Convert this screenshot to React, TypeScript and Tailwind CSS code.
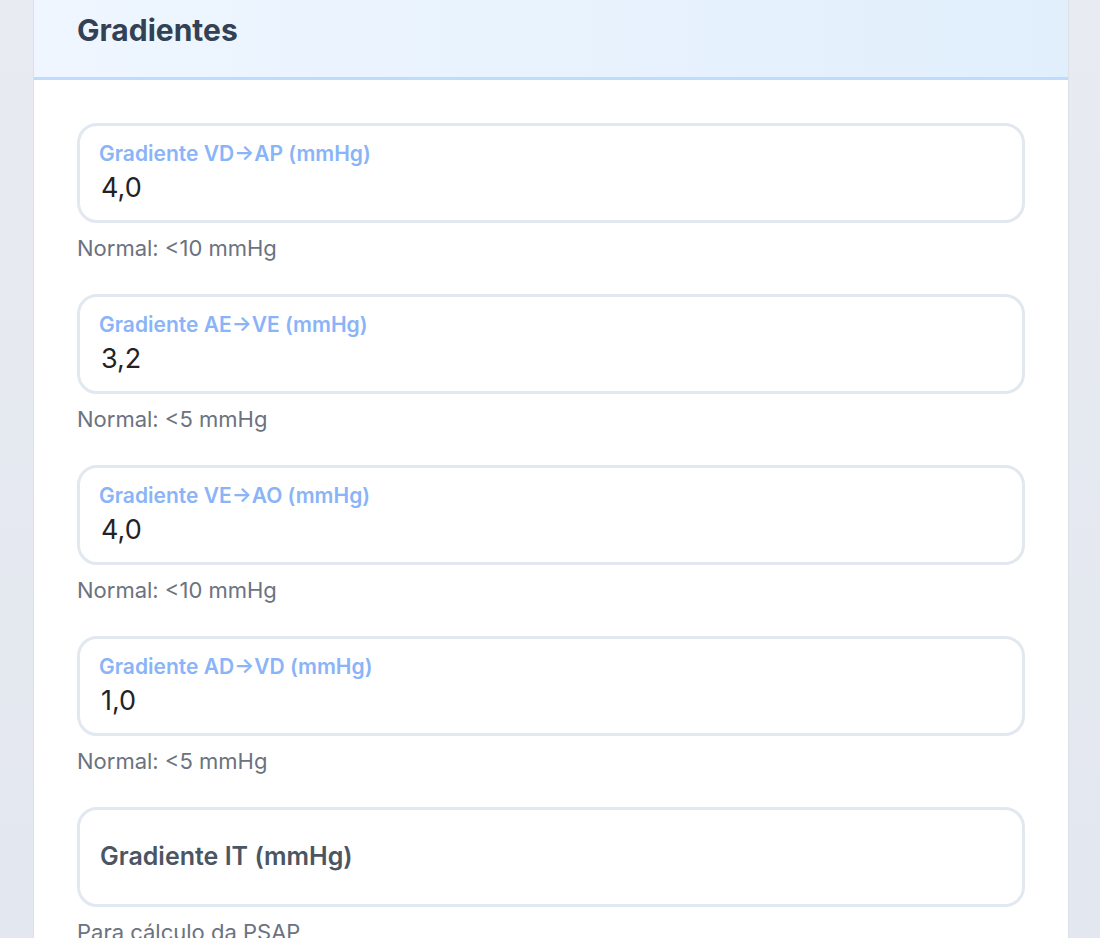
import React from 'react';

const fields = [
  { label: 'Gradiente VD→AP (mmHg)', value: '4,0', hint: 'Normal: <10 mmHg' },
  { label: 'Gradiente AE→VE (mmHg)', value: '3,2', hint: 'Normal: <5 mmHg' },
  { label: 'Gradiente VE→AO (mmHg)', value: '4,0', hint: 'Normal: <10 mmHg' },
  { label: 'Gradiente AD→VD (mmHg)', value: '1,0', hint: 'Normal: <5 mmHg' },
];

function FilledField({ label, value, hint }: { label: string; value: string; hint: string }) {
  return (
    <div className="mb-[31px]">
      <div className="h-[100px] rounded-[20px] border-[3px] border-[#e2e8f0] bg-white pl-[19px] pr-5 pt-[15px] flex flex-col">
        <label className="text-[21px] leading-[26px] font-semibold text-[#8ab4f8]">{label}</label>
        <input
          readOnly
          value={value}
          className="mt-[5px] pl-[2px] text-[27px] leading-[32px] text-[#1f2328] bg-transparent outline-none"
        />
      </div>
      <p className="mt-[10px] text-[22px] leading-[30px] text-[#6b7280]">{hint}</p>
    </div>
  );
}

export default function App() {
  return (
    <div className="min-h-screen h-[938px] overflow-hidden bg-gradient-to-b from-[#e8ebf1] to-[#e3e7ef]" style={{ fontFamily: 'Inter, "Noto Sans", sans-serif' }}>
      <div className="ml-[33px] w-[1036px] h-full bg-white border-x border-[#dce0e7]">
        <div className="h-[80px] border-b-[3px] border-[#bfdbfe] bg-gradient-to-r from-[#eff6ff] to-[#e1effc] px-[43px] pt-[11px]">
          <h2 className="text-[30px] leading-[38px] font-bold text-[#334155]">Gradientes</h2>
        </div>
        <div className="px-[43px] pt-[43px]">
          {fields.map((f) => (
            <FilledField key={f.label} {...f} />
          ))}
          <div className="h-[100px] rounded-[20px] border-[3px] border-[#e2e8f0] bg-white pl-[20px] flex items-center">
            <span className="text-[25px] font-semibold text-[#4b5563]">Gradiente IT (mmHg)</span>
          </div>
          <p className="mt-[10px] text-[22px] leading-[30px] text-[#6b7280]">Para cálculo da PSAP</p>
        </div>
      </div>
    </div>
  );
}
